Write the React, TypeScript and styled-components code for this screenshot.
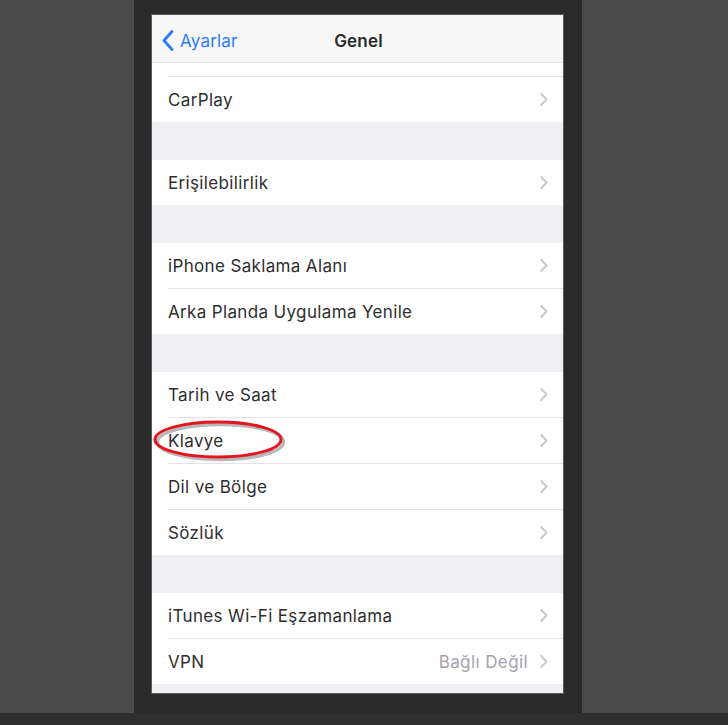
import React from 'react'
import styled, { createGlobalStyle } from 'styled-components'

const Global = createGlobalStyle`
  html, body {
    margin: 0;
    padding: 0;
    background: #4b4b4b;
  }
  * {
    box-sizing: border-box;
  }
`

const Page = styled.div`
  width: 728px;
  height: 725px;
  display: grid;
  grid-template-columns: 134px 448px 1fr;
  grid-template-rows: 713px 12px;
  background: #4b4b4b;
  font-family: Inter, "Open Sans", "Liberation Sans", sans-serif;
`

const Side = styled.div`
  background: #4b4b4b;
`

const Column = styled.div`
  background: #2a2a2a;
  padding: 15px 19px 20px 18px;
`

const Strip = styled.div`
  grid-column: 1 / 4;
  background: #2f2f2f;
`

const Screen = styled.div`
  width: 411px;
  height: 678px;
  background: #efeff4;
  display: flex;
  flex-direction: column;
  overflow: hidden;
  box-shadow: 0 0 0 1px #5a5a5a;
`

const NavBar = styled.div`
  height: 48px;
  flex: none;
  background: #f7f7f8;
  border-bottom: 1px solid #e4e4e6;
  display: grid;
  grid-template-columns: 1fr auto 1fr;
  align-items: center;
  padding: 4px 8px 0 10px;
`

const Back = styled.div`
  display: flex;
  align-items: center;
  gap: 6px;
  color: #2d7cf6;
  font-size: 17px;
  letter-spacing: 0.2px;
`

const Title = styled.div`
  color: #2b2b2b;
  font-size: 17px;
  font-weight: 600;
  letter-spacing: 0.2px;
`

const Stub = styled.div`
  height: 14px;
  flex: none;
  background: #fff;
  display: flex;
  align-items: flex-end;
  padding-left: 16px;

  &::after {
    content: '';
    flex: 1;
    height: 1px;
    background: #e3e3e6;
  }
`

const Group = styled.div`
  background: #fff;
  flex: none;
`

const Gap = styled.div<{ h?: number }>`
  height: ${p => p.h ?? 38}px;
  flex: none;
`

const Row = styled.div`
  position: relative;
  padding-left: 16px;
  background: #fff;
`

const RowInner = styled.div<{ first?: boolean }>`
  height: ${p => (p.first ? 45 : 46)}px;
  border-top: ${p => (p.first ? 'none' : '1px solid #e3e3e6')};
  display: flex;
  align-items: center;
  padding-right: 15px;
`

const Label = styled.div`
  flex: 1;
  color: #2e2e2e;
  font-size: 17px;
  letter-spacing: 0.35px;
`

const Detail = styled.div`
  color: #a4a4a8;
  font-size: 17px;
  letter-spacing: 0.4px;
  margin-right: 12px;
`

const Ellipse = styled.svg`
  position: absolute;
  left: 2px;
  top: 3px;
  width: 132px;
  height: 42px;
  pointer-events: none;
  overflow: visible;
`

const Chevron = () => (
  <svg width="8" height="13" viewBox="0 0 8 13" fill="none">
    <path d="M1.2 1 L6.6 6.5 L1.2 12" stroke="#c7c7cc" strokeWidth="1.8" strokeLinecap="round" strokeLinejoin="round" />
  </svg>
)

const BackChevron = () => (
  <svg width="12" height="21" viewBox="0 0 12 21" fill="none">
    <path d="M10 1.5 L2 10.5 L10 19.5" stroke="#2d7cf6" strokeWidth="2.8" strokeLinecap="round" strokeLinejoin="round" />
  </svg>
)

type Item = {
  label: string
  detail?: string
  circled?: boolean
}

const groups: Item[][] = [
  [{ label: 'Erişilebilirlik' }],
  [{ label: 'iPhone Saklama Alanı' }, { label: 'Arka Planda Uygulama Yenile' }],
  [{ label: 'Tarih ve Saat' }, { label: 'Klavye', circled: true }, { label: 'Dil ve Bölge' }, { label: 'Sözlük' }],
  [{ label: 'iTunes Wi-Fi Eşzamanlama' }, { label: 'VPN', detail: 'Bağlı Değil' }],
]

function Cell({ item, first }: { item: Item; first?: boolean }) {
  return (
    <Row>
      <RowInner first={first}>
        <Label>{item.label}</Label>
        {item.detail && <Detail>{item.detail}</Detail>}
        <Chevron />
      </RowInner>
      {item.circled && (
        <Ellipse viewBox="0 0 132 42">
          <ellipse cx="66.5" cy="22" rx="63" ry="17.5" fill="none" stroke="rgba(0,0,0,0.28)" strokeWidth="3.5" />
          <ellipse cx="64" cy="19.5" rx="63" ry="17.5" fill="none" stroke="#e3161f" strokeWidth="3" />
        </Ellipse>
      )}
    </Row>
  )
}

export default function App() {
  return (
    <Page>
      <Global />
      <Side />
      <Column>
        <Screen>
          <NavBar>
            <Back>
              <BackChevron />
              <span>Ayarlar</span>
            </Back>
            <Title>Genel</Title>
            <div />
          </NavBar>
          <Stub />
          <Group>
            <Cell item={{ label: 'CarPlay' }} first />
          </Group>
          {groups.map((g, gi) => (
            <React.Fragment key={gi}>
              <Gap />
              <Group>
                {g.map((item, i) => (
                  <Cell key={item.label} item={item} first={i === 0} />
                ))}
              </Group>
            </React.Fragment>
          ))}
          <Gap h={10} />
        </Screen>
      </Column>
      <Side />
      <Strip />
    </Page>
  )
}
